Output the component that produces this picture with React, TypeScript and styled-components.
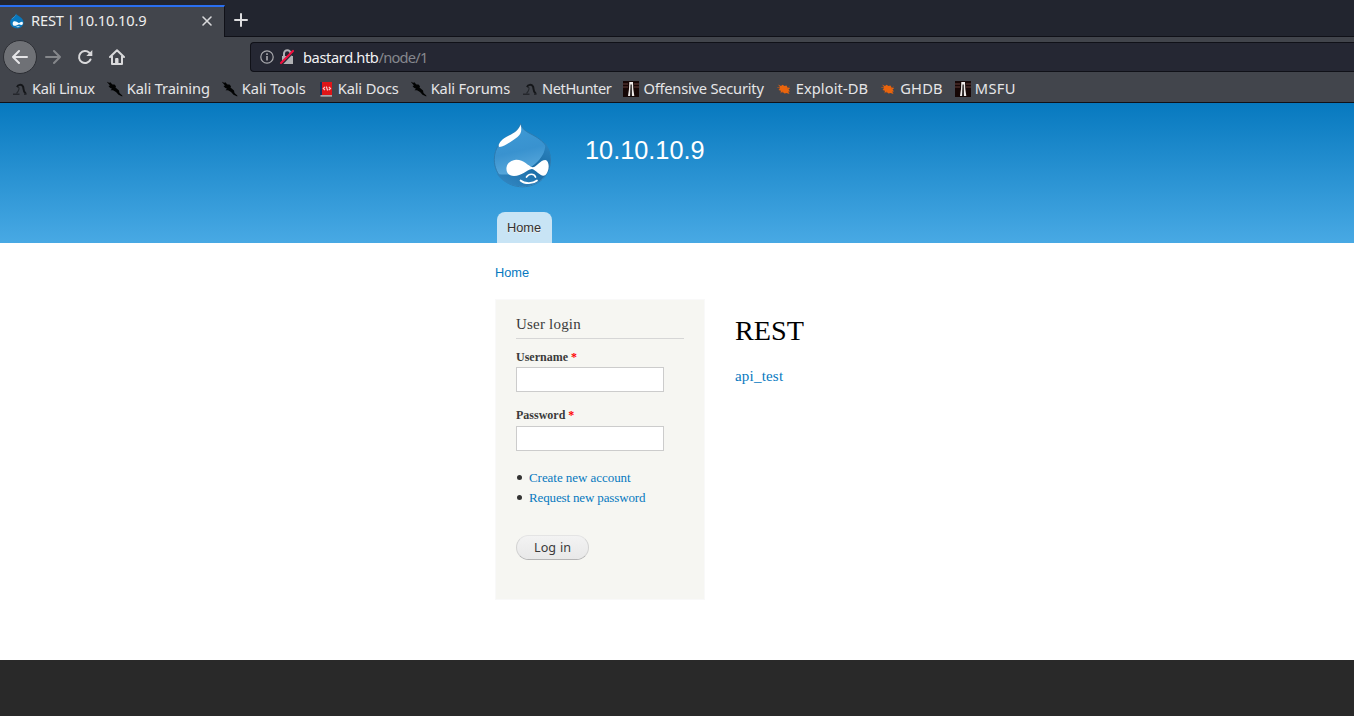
import React from 'react';
import styled, { createGlobalStyle } from 'styled-components';

const Global = createGlobalStyle`
  *, *::before, *::after { box-sizing: border-box; }
  html, body { margin: 0; padding: 0; height: 100%; overflow: hidden; background: #fff; }
  #root { height: 100%; }
  svg { display: block; flex: none; }
`;

const ui = '"Noto Sans", sans-serif';
const serif = '"Liberation Serif", serif';
const sans = '"Liberation Sans", sans-serif';

const Window = styled.div`
  height: 716px;
  display: flex;
  flex-direction: column;
`;
const TabStrip = styled.div`
  height: 37px;
  flex: none;
  display: flex;
  align-items: flex-end;
  background: #22252f;
  border-bottom: 1px solid #101118;
  color: #eeeeee;
  font-family: ${ui};
`;
const Tab = styled.div`
  width: 225px;
  height: 32px;
  margin-bottom: -1px;
  display: flex;
  align-items: center;
  padding: 0 9px 2px 9px;
  background: #42454c;
  border-top: 2px solid #2a6ff0;
  border-right: 1px solid #101118;
`;
const TabTitle = styled.span`
  margin-left: 6px;
  padding-bottom: 2px;
  flex: 1;
  font-size: 14.67px;
  line-height: 20px;
  letter-spacing: -0.15px;
  word-spacing: -0.8px;
  white-space: nowrap;
`;
const NewTab = styled.div`
  padding: 0 0 9px 9px;
`;
const NavBar = styled.div`
  height: 39px;
  flex: none;
  display: flex;
  align-items: center;
  padding: 1px 0 0 3px;
  background: #42454c;
`;
const BackButton = styled.div`
  width: 34px;
  height: 34px;
  display: flex;
  align-items: center;
  justify-content: center;
  border-radius: 50%;
  background: #6f7176;
  border: 1px solid #2c2e34;
`;
const NavIcon = styled.div`
  width: 32px;
  display: flex;
  justify-content: center;
`;
const UrlBar = styled.div`
  margin-left: 117px;
  flex: 1;
  height: 30px;
  display: flex;
  align-items: center;
  padding-left: 9px;
  background: #252733;
  border: 1px solid #101118;
  border-right: 0;
  border-radius: 4px 0 0 4px;
  font: 14.67px/20px ${ui};
  letter-spacing: -0.4px;
  color: #f2f2f4;
`;
const BlockedIcon = styled.svg`
  margin-left: 5px;
`;
const UrlText = styled.span`
  margin: 0 0 1px 8px;
`;
const UrlPath = styled.span`
  color: #86878e;
  letter-spacing: -0.75px;
`;
const Bookmarks = styled.div`
  height: 27px;
  flex: none;
  display: flex;
  gap: 12px;
  padding: 0 0 0 12px;
  background: #42454c;
  border-bottom: 1px solid #101118;
`;
const Bookmark = styled.div<{ $tracking: number }>`
  display: flex;
  align-items: center;
  gap: 4px;
  font: 14.67px/20px ${ui};
  letter-spacing: ${(p) => p.$tracking}px;
  color: #e6e6e8;
  white-space: nowrap;
`;
const BookmarkLabel = styled.span`
  padding-bottom: 2px;
`;

const Header = styled.header`
  height: 140px;
  flex: none;
  display: flex;
  flex-direction: column;
  justify-content: space-between;
  padding: 19px 0 0 492px;
  background: linear-gradient(#0779bf, #48a9e4);
`;
const Brand = styled.div`
  display: flex;
`;
const SiteName = styled.div`
  margin: 13px 0 0 33px;
  font: 25.3px/30px ${sans};
  color: #fff;
`;
const MenuTab = styled.a`
  width: 55px;
  height: 31px;
  margin-left: 5px;
  padding-left: 10px;
  border-radius: 8px 8px 0 0;
  background: #c8e4f5;
  color: #333;
  font: 12.8px/31px ${sans};
  text-shadow: 0 1px #eee;
`;
const Breadcrumb = styled.nav`
  margin: 22px 0 0 495px;
  height: 34px;
  flex: none;
  font: 12.8px/16px ${sans};
  color: #0779bf;
`;
const Columns = styled.main`
  display: flex;
  flex: 1;
  padding-left: 495px;
`;
const LoginBlock = styled.aside`
  width: 210px;
  height: 301px;
  padding: 15px 20px 0;
  background: #f6f6f2;
  border: 1px solid #f9f9f9;
  font-family: ${serif};
  color: #3b3b3b;
`;
const BlockTitle = styled.h2`
  margin: 0 0 10px;
  height: 24px;
  border-bottom: 1px solid #d6d6d6;
  font: 15px/19px ${serif};
  letter-spacing: 0.2px;
`;
const Field = styled.div<{ $gap: number }>`
  margin-bottom: ${(p) => p.$gap}px;
`;
const Label = styled.label<{ $height: number }>`
  display: block;
  height: ${(p) => p.$height}px;
  font: bold 12px/17px ${serif};
`;
const Required = styled.span`
  color: #f00;
`;
const TextInput = styled.input`
  display: block;
  width: 148px;
  height: 25px;
  border: 1px solid #ccc;
  background: #fff;
`;
const LinkList = styled.ul`
  margin: 0 0 27px;
  padding: 0;
  list-style: none;
`;
const LinkItem = styled.li<{ $tracking: number }>`
  display: flex;
  align-items: center;
  gap: 7px;
  padding-left: 1px;
  font: 13px/20px ${serif};
  letter-spacing: ${(p) => p.$tracking}px;
  color: #0779bf;
  &::before {
    content: '';
    width: 5px;
    height: 5px;
    margin-bottom: 1px;
    border-radius: 50%;
    background: #333;
  }
`;
const LoginButton = styled.button`
  display: block;
  width: 73px;
  height: 25px;
  padding: 0;
  border: 1px solid #e4e4e4;
  border-bottom-color: #b4b4b4;
  border-left-color: #d2d2d2;
  border-right-color: #d2d2d2;
  border-radius: 13px;
  background: linear-gradient(#f3f3f3, #e8e8e8);
  color: #3a3a3a;
  font: 12.6px/22px ${ui};
  word-spacing: 0.6px;
`;
const Content = styled.section`
  padding: 14px 0 0 30px;
  font-family: ${serif};
`;
const PageTitle = styled.h1`
  margin: 0;
  font: 28.2px/36px ${serif};
  color: #000;
`;
const ContentLink = styled.a`
  display: block;
  margin-top: 17px;
  font: 15px/20px ${serif};
  letter-spacing: 0.2px;
  color: #0779bf;
`;
const Footer = styled.footer`
  height: 56px;
  flex: none;
  background: #292929;
`;

const Drop = () => (
  <svg width="60" height="66" viewBox="0 0 60 66">
    <defs>
      <linearGradient id="dropBody" x1="0" y1="0" x2="0.2" y2="1">
        <stop offset="0" stopColor="#3f9bd6" />
        <stop offset=".5" stopColor="#3992cf" />
        <stop offset="1" stopColor="#68b3e2" />
      </linearGradient>
      <linearGradient id="dropShade" x1="1" y1="0" x2="0.3" y2="1">
        <stop offset="0" stopColor="#2d86c2" />
        <stop offset=".5" stopColor="#1b6ca5" />
        <stop offset="1" stopColor="#2f84bf" />
      </linearGradient>
    </defs>
    <path d="M28.500 1.500C30 6.500 33 9 38 11.500C49 17 58.500 24 58.500 38C58.500 54 45.500 64.800 30.500 64.800C14.500 64.800 2.300 53 2.300 37.500C2.300 26 9 18 17 13.500C23 10 27 7 28.500 1.500Z" fill="url(#dropBody)" stroke="#2c78ab" strokeWidth=".9" />
    <path d="M53 20.500C57 26 58.300 31 58.300 38C58.300 54 45 64.500 30.500 64.500C19 64.500 9.500 59.500 5 52C20 54 33 51 43 42C51 35 54 28 53 20.500Z" fill="url(#dropShade)" />
    <path d="M28.500 2.500C30 8 29.500 11.500 25.500 15C17 21 12.500 24.500 7.500 25C5 24 8.500 17 17 13.500C23 10.500 27 8 28.500 2.500Z" fill="#fff" />
    <path d="M24 37.700C32 37.500 36 44 40.500 45.300C45 45 48 38 53.500 38C58 39.500 57.500 49 53.500 53C49 56 44.500 48 40 47C34 48 30 54 22 54C16 54 14 49.500 14.500 45.500C15.500 40.500 19.500 38.200 24 37.700Z" fill="#fff" />
    <path d="M34.500 55C37 51.300 42 51.300 43.500 55M28.500 58.500C33 62.300 41 61.800 45 58.500" fill="none" stroke="#fff" strokeWidth="1.700" strokeLinecap="round" />
  </svg>
);

const Favicon = () => (
  <svg width="16" height="16" viewBox="0 0 16 16">
    <path d="M7 0.500C8 3 14.500 4 14.500 9.500C14.500 13 11.500 15.300 8 15.300S1.200 13 1.200 9.300C1.200 5 6.500 4 7 .5Z" fill="#0877bd" />
    <path d="M6.700 1.500C6.500 4.500 3 5 2.200 7C3 4.500 5.800 4.500 6.700 1.500Z" fill="#8ecbed" />
    <path d="M4.500 8.500C7 7.700 9 10 10 10S12.500 8 13.700 9.300C14.500 12 12.700 12.700 10 11.300C8 12.500 4.500 14 3.800 11.500C3.500 10 3.800 9 4.500 8.500ZM7 13.500Q9 15 11 13.300" fill="#f4fbff" />
  </svg>
);

const DragonFaint = () => (
  <svg width="16" height="16" viewBox="0 0 16 16" fill="none">
    <path d="M5 6C6 3.500 9.500 3 11 5.500C12 7.500 10.500 10 14 13" stroke="#15171a" strokeWidth="2" />
    <path d="M5.500 6.500C8.500 5.500 6.500 10.500 4.500 12.500" stroke="#25282c" strokeWidth="1.100" />
    <path d="M1 13.300H7.500M12 13.300H14.500" stroke="#25272c" strokeWidth="1.400" />
  </svg>
);

const Dragon = () => (
  <svg width="16" height="16" viewBox="0 0 16 16" fill="#020303">
    <path d="M-0.500 0.500L2.500 2L3 1L5.500 3.500L7.500 3.500L9 5.200L8.500 6.500L12 9.500L12.500 12L15.300 14.500V15.500L11.500 13.700L9 11L6 9.200L3.500 9.300L5 7.700L3 6.700L1.500 5L3 4.500Z" />
  </svg>
);

const Docs = () => (
  <svg width="16" height="16" viewBox="0 0 16 16">
    <path d="M2 1H4.300V14H2Z" fill="#17305b" />
    <path d="M4 1H14V14H4Z" fill="#df1518" />
    <path d="M2.500 14H14V15.700H2.500Z" fill="#aaa5a7" />
    <path d="M7 5.800L5.300 7.500L7 9.200M10.800 5.800L12.500 7.500L10.800 9.200M8.300 5.500L9.600 9.500" fill="none" stroke="#f6caca" strokeWidth="1.200" />
  </svg>
);

const OffSec = () => (
  <svg width="16" height="16" viewBox="0 0 16 16">
    <path d="M0 0H16V16H0Z" fill="#160706" />
    <path d="M0 3H5M11 3H16M0 6H5M11 6H16" stroke="#4b2c2a" strokeWidth="1.300" />
    <path d="M6.300 1H10L10.300 8L11.300 15H5L6 8Z" fill="#eee9e7" />
    <path d="M7.500 3.500H8.800L9 15H7Z" fill="#272020" />
  </svg>
);

const Bug = () => (
  <svg width="16" height="16" viewBox="0 0 16 16">
    <path d="M2 3.500L5 5L6.500 3.700L8.500 5L10.500 4.500L11.500 6.500L14.300 7L12.500 8.500L14 10.500L12.200 10.500L13.500 13L10.500 12L8.500 12.500L7 11.200L4.500 11.500L5 9.700L2.500 9L4 7.500L1 6L4 6Z" fill="#e9640d" />
    <path d="M1 6.500H4M4 12L7 11M11.500 7L14 5.500" stroke="#8a4c2d" strokeWidth=".7" />
  </svg>
);

const bookmarks = [
  { label: 'Kali Linux', Icon: DragonFaint, tracking: -0.33 },
  { label: 'Kali Training', Icon: Dragon, tracking: -0.13 },
  { label: 'Kali Tools', Icon: Dragon, tracking: -0.04 },
  { label: 'Kali Docs', Icon: Docs, tracking: -0.15 },
  { label: 'Kali Forums', Icon: Dragon, tracking: -0.15 },
  { label: 'NetHunter', Icon: DragonFaint, tracking: -0.43 },
  { label: 'Offensive Security', Icon: OffSec, tracking: -0.22 },
  { label: 'Exploit-DB', Icon: Bug, tracking: 0.1 },
  { label: 'GHDB', Icon: Bug, tracking: 0.2 },
  { label: 'MSFU', Icon: OffSec, tracking: 0.3 },
];

const Arrow = ({ color, flip }: { color: string; flip?: boolean }) => (
  <svg width="16" height="16" viewBox="0 0 16 16" fill="none" stroke={color} strokeWidth="2" strokeLinecap="round" strokeLinejoin="round">
    <path d={flip ? 'M1 8H15M9 2L15 8L9 14' : 'M15 8H1M7 2L1 8L7 14'} />
  </svg>
);

export default function App() {
  return (
    <Window>
      <Global />
      <TabStrip>
        <Tab>
          <Favicon />
          <TabTitle>REST | 10.10.10.9</TabTitle>
          <svg width="16" height="16" viewBox="0 0 16 16" fill="none" stroke="#d9d9db" strokeWidth="1.600" strokeLinecap="round">
            <path d="M4 4L12 12M12 4L4 12" />
          </svg>
        </Tab>
        <NewTab>
          <svg width="14" height="14" viewBox="0 0 14 14" stroke="#dedee0" strokeWidth="2" strokeLinecap="round">
            <path d="M7 1V13M1 7H13" />
          </svg>
        </NewTab>
      </TabStrip>
      <NavBar>
        <BackButton><Arrow color="#e5e5e7" /></BackButton>
        <NavIcon><Arrow color="#85878b" flip /></NavIcon>
        <NavIcon>
          <svg width="16" height="16" viewBox="0 0 16 16">
            <path d="M13.500 10.500A6 6 0 1 1 12.300 3.800" fill="none" stroke="#d9d9db" strokeWidth="2" strokeLinecap="round" />
            <path d="M15.300 1V7H9.300Z" fill="#d9d9db" />
          </svg>
        </NavIcon>
        <NavIcon>
          <svg width="16" height="16" viewBox="0 0 16 16" fill="none" stroke="#d9d9db" strokeWidth="2" strokeLinecap="round" strokeLinejoin="round">
            <path d="M1 8L8 1.300L15 8M3 7.500V15H13V7.500" />
            <path d="M7 9.500H9V14H7Z" fill="#d9d9db" strokeWidth="1" />
          </svg>
        </NavIcon>
        <UrlBar>
          <svg width="14" height="14" viewBox="0 0 14 14">
            <circle cx="7" cy="7" r="6.200" fill="none" stroke="#aaaaae" strokeWidth="1.200" />
            <path d="M7 6V10.500M7 3.300V4.900" stroke="#aaaaae" strokeWidth="1.600" />
          </svg>
          <BlockedIcon width="16" height="16" viewBox="0 0 16 16">
            <path d="M5 7V4.500A3.300 3.300 0 0 1 11.600 4.500V7" fill="none" stroke="#b0b0b4" strokeWidth="2" />
            <path d="M3 7H14V15H3Z" fill="#b0b0b4" />
            <path d="M2.300 15.700L15 2.300" stroke="#252733" strokeWidth="2" />
            <path d="M2 14L14 2" stroke="#f0103f" strokeWidth="2.200" strokeLinecap="round" />
          </BlockedIcon>
          <UrlText>bastard.htb<UrlPath>/node/1</UrlPath></UrlText>
        </UrlBar>
      </NavBar>
      <Bookmarks>
        {bookmarks.map(({ label, Icon, tracking }) => (
          <Bookmark key={label} $tracking={tracking}>
            <Icon />
            <BookmarkLabel>{label}</BookmarkLabel>
          </Bookmark>
        ))}
      </Bookmarks>
      <Header>
        <Brand>
          <Drop />
          <SiteName>10.10.10.9</SiteName>
        </Brand>
        <MenuTab>Home</MenuTab>
      </Header>
      <Breadcrumb>Home</Breadcrumb>
      <Columns>
        <LoginBlock>
          <BlockTitle>User login</BlockTitle>
          <Field $gap={15}>
            <Label $height={18}>Username <Required>*</Required></Label>
            <TextInput type="text" />
          </Field>
          <Field $gap={17}>
            <Label $height={19}>Password <Required>*</Required></Label>
            <TextInput type="password" />
          </Field>
          <LinkList>
            <LinkItem $tracking={-0.05}>Create new account</LinkItem>
            <LinkItem $tracking={-0.14}>Request new password</LinkItem>
          </LinkList>
          <LoginButton type="button">Log in</LoginButton>
        </LoginBlock>
        <Content>
          <PageTitle>REST</PageTitle>
          <ContentLink>api_test</ContentLink>
        </Content>
      </Columns>
      <Footer />
    </Window>
  );
}
